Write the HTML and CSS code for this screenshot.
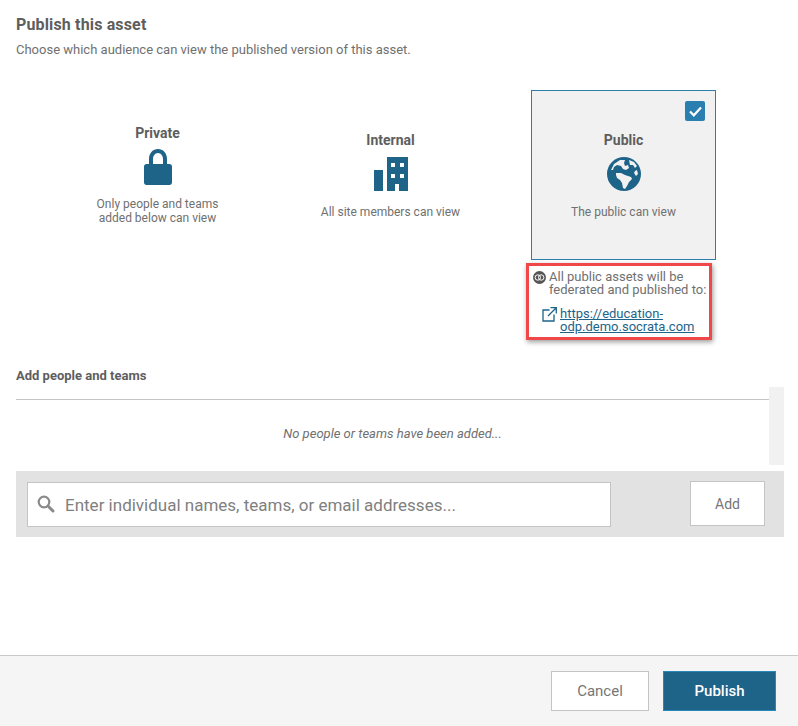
FILE: index.html
```html
<!DOCTYPE html>
<html lang="en">
<head>
    <meta charset="UTF-8">
    <meta name="viewport" content="width=device-width, initial-scale=1.0">
    <title>Publish this asset</title>
    <link rel="stylesheet" href="styles.css">
</head>
<body>
    <div class="modal">
        <div class="content">
            <h1 class="title">Publish this asset</h1>
            <p class="subtitle">Choose which audience can view the published version of this asset.</p>

            <div class="audiences">
                <div class="audience">
                    <div class="audience-name">Private</div>
                    <svg class="audience-icon lock" width="28" height="37" viewBox="0 0 28 37">
                        <path fill="#1e6388" fill-rule="evenodd" d="M5 16V11C5 5 9 1 14 1s9 4 9 10v5h2.500c1.400 0 2.500 1.100 2.500 2.500v16c0 1.400-1.100 2.500-2.500 2.500h-23C1.100 37 0 35.900 0 34.500v-16C0 17.100 1.100 16 2.500 16zM9 16h10V11c0-3-2-6-5-6s-5 3-5 6z"/>
                    </svg>
                    <div class="audience-text">Only people and teams<br>added below can view</div>
                </div>
                <div class="audience">
                    <div class="audience-name">Internal</div>
                    <svg class="audience-icon" width="34" height="34" viewBox="0 0 34 34">
                        <path fill="#1e6388" d="M0 13h9v21H0z"/>
                        <path fill="#1e6388" fill-rule="evenodd" d="M13 0h21v34h-9v-7h-4v7h-8zM17 6v4h4V6zM26 6v4h4V6zM17 17v4h4v-4zM26 17v4h4v-4z"/>
                    </svg>
                    <div class="audience-text">All site members can view</div>
                </div>
                <div class="audience selected">
                    <span class="check">
                        <svg width="13" height="11" viewBox="0 0 13 11">
                            <path fill="none" stroke="#fff" stroke-width="2.200" d="M1 5.500l3.800 3.800L12 1.500"/>
                        </svg>
                    </span>
                    <div class="audience-name">Public</div>
                    <svg class="audience-icon" width="34" height="34" viewBox="0 0 34 34">
                        <circle cx="17" cy="17" r="17" fill="#1e6388"/>
                        <path fill="#f1f1f1" d="M4 13l3-6 6-4 5 0-1 3 1 3 3-1 1 3-3 2-3-1-2-3-4-1-3 2-1 3z"/>
                        <path fill="#f1f1f1" d="M22 3l5 2 3 4-2 2-2-3-3 0z"/>
                        <path fill="#f1f1f1" d="M9 16l5 0 4 2 6 2 1 2-3 3-2 4-2 3-2-1-1-5-2-3-3-2-1-3z"/>
                        <path fill="#f1f1f1" d="M28 14l2-1 1 4-2 2-2-3z"/>
                    </svg>
                    <div class="audience-text">The public can view</div>
                </div>
                <div class="federation">
                    <div class="federation-text">
                        <svg class="federation-icon" width="13" height="13" viewBox="0 0 13 13">
                            <circle cx="6.500" cy="6.500" r="6.500" fill="#555"/>
                            <circle cx="4.800" cy="6.500" r="2.700" fill="none" stroke="#fff" stroke-width="1"/>
                            <circle cx="8.200" cy="6.500" r="2.700" fill="none" stroke="#fff" stroke-width="1"/>
                        </svg>
                        <span>All public assets will be federated and published to:</span>
                    </div>
                    <div class="federation-link">
                        <svg class="link-icon" width="15" height="15" viewBox="0 0 15 15">
                            <path fill="none" stroke="#1e6388" stroke-width="1.300" d="M7.500 3H1v11h11V7.500M6 9l8-8M8.500 .7h5.800v5.800"/>
                        </svg>
                        <a href="#">https://education-odp.demo.socrata.com</a>
                    </div>
                </div>
            </div>

            <div class="share-title">Add people and teams</div>
            <div class="share-list">
                <div class="share-body">
                    <div class="share-empty">No people or teams have been added...</div>
                </div>
                <div class="scroll-track"></div>
            </div>
            <div class="add-bar">
                <div class="search">
                    <svg width="18" height="18" viewBox="0 0 18 18">
                        <circle cx="7" cy="7" r="5.300" fill="none" stroke="#8a8a8a" stroke-width="2.200"/>
                        <path stroke="#8a8a8a" stroke-width="3" stroke-linecap="round" d="M11.500 11.500l4.500 4.500"/>
                    </svg>
                    <span class="placeholder">Enter individual names, teams, or email addresses...</span>
                </div>
                <div class="btn add-btn">Add</div>
            </div>
        </div>
        <div class="footer">
            <div class="btn cancel-btn">Cancel</div>
            <div class="btn publish-btn">Publish</div>
        </div>
    </div>
</body>
</html>
```

FILE: styles.css
```css
* {
    box-sizing: border-box;
}
body {
    margin: 0;
    background-color: #fff;
    font-family: Roboto, "Liberation Sans", sans-serif;
    color: #5e5e5e;
}
.modal {
    width: 798px;
    height: 726px;
    display: flex;
    flex-direction: column;
    overflow: hidden;
}
.content {
    flex: 1;
    padding: 15px 14px 0 16px;
}
.title {
    margin: 0;
    font-size: 16px;
    line-height: 19px;
    font-weight: 700;
    letter-spacing: 0.15px;
}
.subtitle {
    margin: 8px 0 0;
    font-size: 13px;
    line-height: 16px;
    color: #707070;
}
.audiences {
    display: grid;
    grid-template-columns: repeat(3, 185px);
    column-gap: 48px;
    margin: 32px 0 0 49px;
}
.audience {
    position: relative;
    height: 170px;
    display: flex;
    flex-direction: column;
    align-items: center;
    justify-content: center;
    text-align: center;
    border: 1px solid transparent;
}
.selected {
    background-color: #f1f1f1;
    border-color: #2a7fab;
}
.audience-name {
    font-size: 14px;
    line-height: 17px;
    font-weight: 700;
}
.audience-icon {
    margin-top: 8px;
}
.lock {
    margin-top: 6px;
    margin-bottom: -2px;
}
.audience-text {
    margin-top: 14px;
    font-size: 12px;
    line-height: 14px;
    color: #707070;
}
.check {
    position: absolute;
    top: 10px;
    right: 10px;
    width: 20px;
    height: 20px;
    display: flex;
    align-items: center;
    justify-content: center;
    background-color: #2a7fb0;
    border-radius: 2px;
}
.federation {
    grid-column: 3;
    width: 186px;
    height: 77px;
    margin: 3px 0 0 -5px;
    padding: 4px 0 0 4px;
    border: 3px solid #f04848;
    box-shadow: 1px 2px 5px rgba(0, 0, 0, 0.4);
    font-size: 13px;
    line-height: 13px;
}
.federation-text {
    display: flex;
    color: #707070;
}
.federation-icon {
    flex: none;
    margin: 1px 3px 0 0;
}
.federation-link {
    display: flex;
    margin: 11px 0 0 9px;
}
.link-icon {
    flex: none;
    margin-right: 3px;
}
.federation-link a {
    color: #1e6388;
}
.share-title {
    margin-top: 29px;
    font-size: 13px;
    line-height: 14px;
    font-weight: 700;
}
.share-list {
    display: flex;
    height: 78px;
    margin-top: 4px;
}
.share-body {
    flex: 1;
    padding-top: 12px;
}
.share-empty {
    height: 66px;
    border-top: 1px solid #c4c4c4;
    padding-top: 26px;
    text-align: center;
    font-size: 13px;
    line-height: 16px;
    font-style: italic;
    color: #707070;
}
.scroll-track {
    width: 15px;
    background-color: #f1f1f1;
}
.add-bar {
    display: flex;
    justify-content: space-between;
    align-items: center;
    height: 66px;
    margin-top: 6px;
    padding: 0 19px 0 11px;
    background-color: #e2e2e2;
}
.search {
    display: flex;
    align-items: center;
    width: 584px;
    height: 45px;
    padding-left: 9px;
    background-color: #fff;
    border: 1px solid #c4c4c4;
}
.placeholder {
    margin: 2px 0 0 10px;
    font-size: 17px;
    color: #808080;
}
.btn {
    display: flex;
    align-items: center;
    justify-content: center;
    border: 1px solid #c4c4c4;
    background-color: #fff;
    font-size: 15px;
    color: #767676;
}
.add-btn {
    width: 75px;
    height: 45px;
    margin-bottom: 2px;
    padding-top: 1px;
    font-size: 14px;
}
.footer {
    display: flex;
    justify-content: flex-end;
    gap: 14px;
    height: 71px;
    padding: 15px 22px 0 0;
    background-color: #f5f5f5;
    border-top: 1px solid #c8c8c8;
}
.cancel-btn {
    width: 98px;
    height: 40px;
}
.publish-btn {
    width: 113px;
    height: 40px;
    background-color: #1e6388;
    border-color: #2a88b8;
    color: #fff;
    font-weight: 500;
}
```
